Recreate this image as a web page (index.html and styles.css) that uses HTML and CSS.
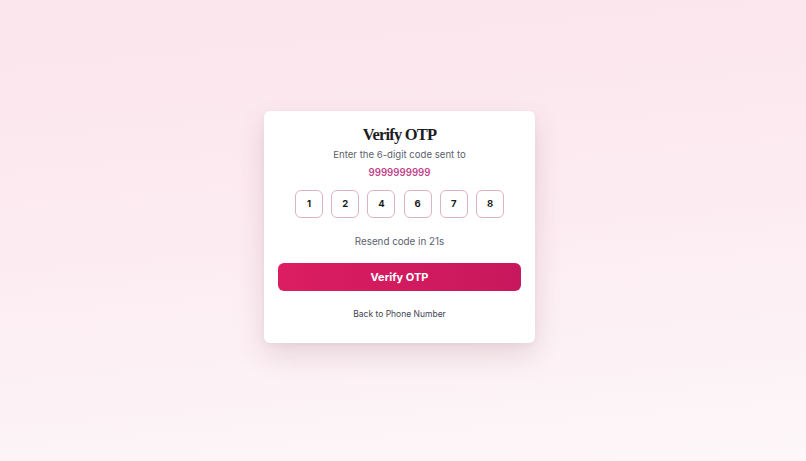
FILE: index.html
```html
<!DOCTYPE html>
<html lang="en">
<head>
<meta charset="utf-8">
<title>Verify OTP</title>
<link rel="stylesheet" href="styles.css">
</head>
<body>
<main class="page">
  <section class="card">
    <h1 class="title">Verify OTP</h1>
    <p class="subtitle">Enter the 6-digit code sent to</p>
    <p class="phone">9999999999</p>
    <div class="otp">
      <input class="digit" value="1" maxlength="1">
      <input class="digit" value="2" maxlength="1">
      <input class="digit" value="4" maxlength="1">
      <input class="digit" value="6" maxlength="1">
      <input class="digit" value="7" maxlength="1">
      <input class="digit" value="8" maxlength="1">
    </div>
    <p class="resend">Resend code in 21s</p>
    <button class="verify">Verify OTP</button>
    <a class="back" href="#">Back to Phone Number</a>
  </section>
</main>
</body>
</html>
```
FILE: styles.css
```css
* { box-sizing: border-box; }
html, body { margin: 0; height: 100%; }
body {
  font-family: Inter, "Noto Sans", sans-serif;
  background: linear-gradient(175deg, #fbe5ec 0%, #fcecf1 50%, #fdf7f9 100%);
}
.page {
  height: 461px;
  display: flex;
  align-items: center;
  justify-content: center;
  padding: 0 7px 8px 0;
}
.card {
  width: 271px;
  background: #fff;
  border-radius: 6px;
  box-shadow: 0 12px 28px rgba(120, 60, 80, 0.16), 0 2px 6px rgba(120, 60, 80, 0.05);
  padding: 13px 14px 23px;
  display: flex;
  flex-direction: column;
  align-items: center;
}
.title {
  margin: 0;
  font-family: "Liberation Serif", "DejaVu Serif", serif;
  font-weight: 700;
  font-size: 16.5px;
  letter-spacing: -0.8px;
  color: #1c1c24;
  line-height: 22px;
}
.subtitle {
  margin: 1px 0 0;
  font-size: 9.6px;
  color: #5a5f6b;
  line-height: 16px;
}
.phone {
  margin: 2px 0 0;
  font-size: 9.7px;
  font-weight: 600;
  color: #c2458a;
  line-height: 16px;
}
.otp {
  margin-top: 9px;
  display: flex;
  gap: 8.2px;
}
.digit {
  width: 28px;
  height: 28px;
  border: 1px solid #dcb3c3;
  border-radius: 6px;
  text-align: center;
  font-family: Inter, sans-serif;
  font-size: 9.5px;
  font-weight: 700;
  color: #1a1a22;
  background: #fff;
  padding: 0;
  outline: none;
}
.resend {
  margin: 16px 0 0;
  font-size: 9.8px;
  color: #5a5f6b;
  line-height: 16px;
}
.verify {
  margin-top: 13px;
  width: 100%;
  height: 28px;
  border: 0;
  border-radius: 6px;
  background: linear-gradient(90deg, #dc1d61 0%, #c8185d 100%);
  color: #fff;
  font-family: Inter, sans-serif;
  font-size: 11px;
  font-weight: 700;
  cursor: pointer;
}
.back {
  margin-top: 17px;
  font-size: 8.5px;
  color: #424654;
  text-decoration: none;
  line-height: 12px;
}
```
